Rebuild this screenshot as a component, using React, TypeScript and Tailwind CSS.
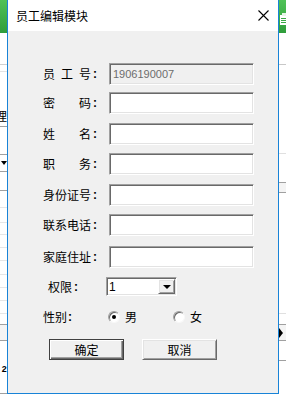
import React from 'react';

const cjk = "font-['Noto_Sans_CJK_SC','Noto_Sans',sans-serif]";

const sunken =
  'border border-t-[#a0a0a0] border-l-[#a0a0a0] border-b-white border-r-white shadow-[inset_1px_1px_0_#696969,inset_-1px_-1px_0_#e3e3e3]';

const raised =
  'border border-t-white border-l-white border-b-[#696969] border-r-[#696969] shadow-[inset_1px_1px_0_#e3e3e3,inset_-1px_-1px_0_#a0a0a0]';

const SpreadLabel = ({ chars }: { chars: string[] }) => (
  <div className="w-[66px] flex items-center">
    <div className="w-[48px] flex justify-between">
      {chars.map((c, i) => (
        <span key={i}>{c}</span>
      ))}
    </div>
    <span className="ml-[2px] font-['Liberation_Sans',sans-serif] font-bold">:</span>
  </div>
);

const fields = [
  { chars: ['员', '工', '号'], value: '1906190007', disabled: true, mt: 'mt-[32px]' },
  { chars: ['密', '码'], value: '', disabled: false, mt: 'mt-[7px]' },
  { chars: ['姓', '名'], value: '', disabled: false, mt: 'mt-[9px]' },
  { chars: ['职', '务'], value: '', disabled: false, mt: 'mt-[8px]' },
  { chars: ['身', '份', '证', '号'], value: '', disabled: false, mt: 'mt-[9px]' },
  { chars: ['联', '系', '电', '话'], value: '', disabled: false, mt: 'mt-[8px]' },
  { chars: ['家', '庭', '住', '址'], value: '', disabled: false, mt: 'mt-[10px]' },
];

const Radio = ({ checked }: { checked: boolean }) => (
  <div
    className={`w-[12px] h-[12px] rounded-full border border-t-[#a0a0a0] border-l-[#a0a0a0] border-b-[#f8f8f8] border-r-[#f8f8f8] bg-white flex items-center justify-center shadow-[inset_1px_1px_0_#696969]`}
  >
    {checked && <div className="w-[4px] h-[4px] rounded-full bg-black" />}
  </div>
);

const LeftStrip = () => (
  <div className="w-[7px] shrink-0 flex flex-col overflow-hidden bg-white">
    <div className="h-[33px] bg-linear-to-b from-[#4fc257] to-[#2f9d3b]" />
    <div className="h-[31px]" />
    <div className="h-px bg-[#d0d0d0]" />
    <div className="h-[6px]" />
    <div className="h-px bg-[#e3e3e3]" />
    <div className="h-[36px]" />
    <div className={`h-[16px] flex items-center justify-end text-[12px] leading-none text-black ${cjk}`}>
      <span className="shrink-0">理</span>
    </div>
    <div className="h-[2px]" />
    <div className="h-px bg-[#a0a0a0]" />
    <div className="h-[27px]" />
    <div className="h-px bg-[#a0a0a0]" />
    <div className="h-[16px] flex items-center justify-end">
      <div className="w-0 h-0 border-l-[3px] border-r-[3px] border-t-[4px] border-l-transparent border-r-transparent border-t-black" />
    </div>
    <div className="h-px bg-[#a0a0a0]" />
    <div className="h-[18px]" />
    <div className="h-px bg-[#a0a0a0]" />
    <div className="h-[16px]" />
    <div className="h-px bg-[#e6e6e6]" />
    <div className="h-[14px]" />
    <div className="h-px bg-[#e6e6e6]" />
    <div className="h-[11px]" />
    <div className="h-px bg-[#e6e6e6]" />
    <div className="h-[12px]" />
    <div className="h-px bg-[#e6e6e6]" />
    <div className="h-[12px]" />
    <div className="h-px bg-[#e6e6e6]" />
    <div className="h-[13px]" />
    <div className="h-px bg-[#e6e6e6]" />
    <div className="h-[12px]" />
    <div className="h-px bg-[#e6e6e6]" />
    <div className="h-[12px]" />
    <div className="h-px bg-[#e6e6e6]" />
    <div className="h-[12px]" />
    <div className="h-px bg-[#e6e6e6]" />
    <div className="h-[10px]" />
    <div className="h-px bg-[#a0a0a0]" />
    <div className="h-[15px] bg-[#f4f4f4]" />
    <div className="h-px bg-[#a0a0a0]" />
    <div className="h-[24px]" />
    <div className="h-[10px] flex items-center justify-end text-[9px] leading-none font-['Liberation_Mono',monospace] font-bold">
      <span className="shrink-0">2</span>
    </div>
    <div className="h-[18px]" />
    <div className="h-px bg-[#a0a0a0]" />
  </div>
);

const RightStrip = () => (
  <div className="w-[7px] shrink-0 flex flex-col overflow-hidden bg-white">
    <div className="h-[33px] bg-linear-to-b from-[#4fc257] to-[#2f9d3b] pt-[13px] pl-[1px]">
      <svg width="8" height="12" viewBox="0 0 8 12">
        <rect x="0" y="2" width="8" height="10" fill="#ffffff" />
        <rect x="2" y="0" width="4" height="3" fill="#e8f5e9" />
        <rect x="1" y="5" width="6" height="1" fill="#3aa845" />
        <rect x="1" y="7" width="6" height="1" fill="#3aa845" />
        <rect x="1" y="9" width="6" height="1" fill="#3aa845" />
      </svg>
    </div>
    <div className="h-[31px]" />
    <div className="h-px bg-[#c8c8c8]" />
    <div className="h-[88px]" />
    <div className="h-px bg-[#e0e0e0]" />
    <div className="h-[28px]" />
    <div className="h-px bg-[#a0a0a0]" />
    <div className="h-[9px] bg-[#f4f4f4]" />
    <div className="h-px bg-[#a0a0a0]" />
    <div className="h-[120px]" />
    <div className="h-px bg-[#e0e0e0]" />
    <div className="h-[10px]" />
    <div className="h-px bg-[#a0a0a0]" />
    <div className="h-[15px] flex items-center bg-[#f4f4f4]">
      <div className="w-0 h-0 border-t-[5px] border-b-[5px] border-l-[4px] border-t-transparent border-b-transparent border-l-black" />
    </div>
    <div className="h-px bg-[#a0a0a0]" />
    <div className="h-[19px]" />
    <div className="h-px bg-[#a0a0a0]" />
  </div>
);

export default function App() {
  return (
    <div className="w-[286px] h-[401px] flex bg-white overflow-hidden">
      <LeftStrip />

      {/* Dialog window */}
      <div className="w-[272px] h-[394px] shrink-0 border-x border-b border-[#1883d7] bg-[#f0f0f0] flex flex-col">
        <div className="h-[31px] bg-white flex items-center justify-between pl-[8px] pr-[9px]">
          <span className={`text-[12px] text-black ${cjk}`}>员工编辑模块</span>
          <svg width="11" height="11" viewBox="0 0 11 11">
            <path d="M0.5 0.5 L10.5 10.5 M10.5 0.5 L0.5 10.5" stroke="#000" strokeWidth="1.1" />
          </svg>
        </div>

        <div className={`flex flex-col text-[12px] text-black ${cjk}`}>
          {fields.map((f, i) => (
            <div key={i} className={`${f.mt} h-[22px] flex items-center pl-[35px]`}>
              <SpreadLabel chars={f.chars} />
              <div
                className={`w-[145px] h-[22px] flex items-center pl-[3px] ${sunken} ${
                  f.disabled ? 'bg-[#f0f0f0]' : 'bg-white'
                }`}
              >
                <span className="font-['Liberation_Sans',sans-serif] text-[11px] text-[#6d6d6d]">{f.value}</span>
              </div>
            </div>
          ))}

          {/* 权限 */}
          <div className="mt-[9px] h-[19px] flex items-center pl-[40px]">
            <div className="w-[58px] flex items-center">
              <span>权限</span>
              <span className="ml-[2px] font-['Liberation_Sans',sans-serif] font-bold">:</span>
            </div>
            <div className={`w-[71px] h-[19px] bg-white flex items-center justify-between pl-[2px] pr-[1px] ${sunken}`}>
              <span className="font-['Liberation_Sans',sans-serif] text-[12px]">1</span>
              <div className={`w-[17px] h-[15px] bg-[#f0f0f0] flex items-center justify-center ${raised}`}>
                <div className="w-0 h-0 border-l-[4px] border-r-[4px] border-t-[4px] border-l-transparent border-r-transparent border-t-black" />
              </div>
            </div>
          </div>

          {/* 性别 */}
          <div className="mt-[13px] h-[16px] flex items-center pl-[35px]">
            <div className="w-[65px] flex items-center">
              <span>性别</span>
              <span className="ml-[1px] font-['Liberation_Sans',sans-serif] font-bold">:</span>
            </div>
            <Radio checked />
            <span className="ml-[5px]">男</span>
            <div className="w-[36px]" />
            <Radio checked={false} />
            <span className="ml-[5px]">女</span>
          </div>

          {/* buttons */}
          <div className="mt-[14px] h-[21px] flex items-center pl-[41px] gap-[18px]">
            <button
              className={`w-[75px] h-[21px] bg-[#f0f0f0] border border-[#404040] shadow-[inset_1px_1px_0_#ffffff,inset_-1px_-1px_0_#696969,inset_-2px_-2px_0_#a0a0a0] flex items-center justify-center text-[12px] ${cjk}`}
            >
              确定
            </button>
            <button
              className={`w-[75px] h-[21px] bg-[#f0f0f0] flex items-center justify-center text-[12px] ${raised} ${cjk}`}
            >
              取消
            </button>
          </div>
        </div>
      </div>

      <RightStrip />
    </div>
  );
}
